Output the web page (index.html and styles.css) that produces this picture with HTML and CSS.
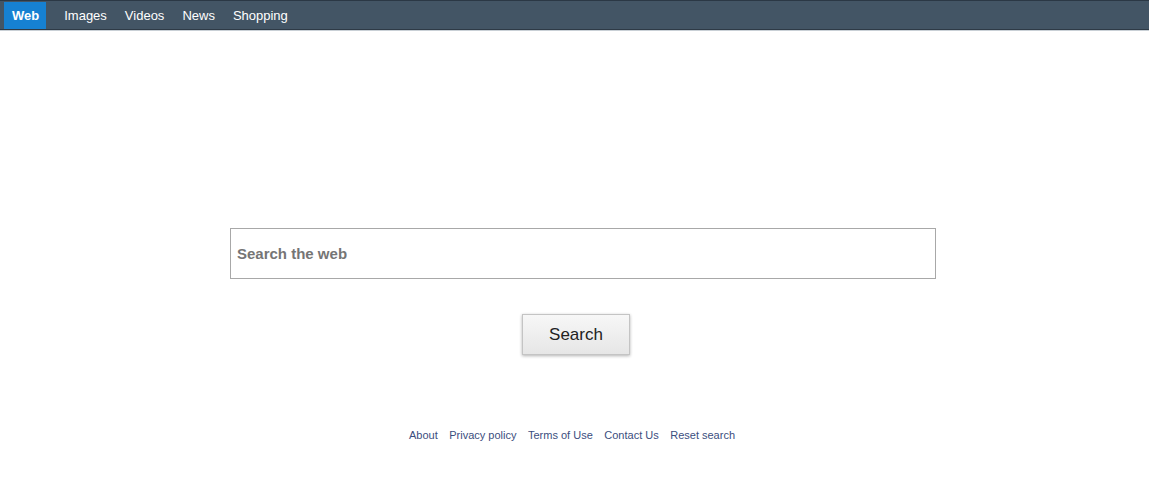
FILE: index.html
```html
<!DOCTYPE html>
<html>
<head>
<meta charset="utf-8">
<link rel="stylesheet" href="styles.css">
</head>
<body>
<nav class="topnav">
  <a class="tab active" href="#">Web</a>
  <a class="tab" href="#">Images</a>
  <a class="tab" href="#">Videos</a>
  <a class="tab" href="#">News</a>
  <a class="tab" href="#">Shopping</a>
</nav>
<main class="main">
  <form class="search-form">
    <input class="search-input" type="text" placeholder="Search the web">
    <button class="search-btn" type="button">Search</button>
  </form>
  <footer class="footer">
    <a href="#">About</a>
    <a href="#">Privacy policy</a>
    <a href="#">Terms of Use</a>
    <a href="#">Contact Us</a>
    <a href="#">Reset search</a>
  </footer>
</main>
</body>
</html>
```
FILE: styles.css
```css
html, body {
  margin: 0;
  padding: 0;
  background: #fff;
  font-family: "Liberation Sans", Arial, sans-serif;
}
.topnav {
  display: flex;
  align-items: stretch;
  height: 28px;
  background: #435565;
  border-top: 1px solid #2b3845;
  border-bottom: 1px solid #2e3a46;
  box-shadow: 0 1px 0 #c9d0d6;
  padding-left: 4px;
}
.tab {
  display: flex;
  align-items: center;
  color: #fff;
  text-decoration: none;
  font-size: 13px;
  padding: 0 9px;
  margin-top: 1px;
}
.tab.active {
  background: #1681d2;
  font-weight: bold;
  padding: 0 7px 0 8px;
  margin-right: 9px;
}
.main {
  display: flex;
  flex-direction: column;
  align-items: center;
}
.search-form {
  display: flex;
  flex-direction: column;
  align-items: center;
  padding-top: 198px;
}
.search-input {
  box-sizing: border-box;
  width: 706px;
  height: 51px;
  border: 1px solid #a8a8a8;
  padding: 0 6px;
  font-family: "Liberation Sans", Arial, sans-serif;
  font-size: 15px;
  font-weight: bold;
  color: #333;
  margin-left: 17px;
  outline: none;
}
.search-input::placeholder {
  color: #757575;
  opacity: 1;
}
.search-btn {
  box-sizing: border-box;
  margin-top: 35px;
  margin-left: 3px;
  width: 108px;
  height: 41px;
  border: 1px solid #c4c4c4;
  background: linear-gradient(#f7f7f7, #e6e6e6);
  box-shadow: 0 1px 3px rgba(0,0,0,0.3);
  font-family: "Liberation Sans", Arial, sans-serif;
  font-size: 17px;
  color: #222;
  cursor: pointer;
}
.footer {
  display: flex;
  gap: 11.5px;
  margin-top: 74px;
  margin-right: 5px;
  font-size: 11px;
}
.footer a {
  color: #3b4e7e;
  text-decoration: none;
}
```
